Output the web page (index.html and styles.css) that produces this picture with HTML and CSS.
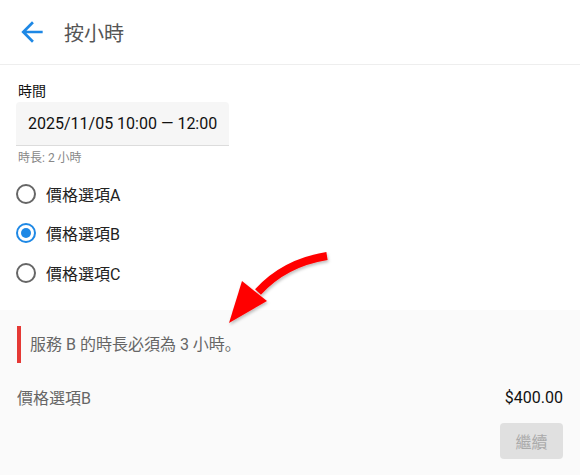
FILE: index.html
```html
<!DOCTYPE html>
<html lang="en">
<head>
    <meta charset="UTF-8">
    <meta name="viewport" content="width=device-width, initial-scale=1.0">
    <title>按小時</title>
    <link rel="stylesheet" href="styles.css">
</head>
<body>
    <div class="page">
        <div class="topbar">
            <svg class="back" width="32" height="32" viewBox="0 0 24 24">
                <path d="M20 11H7.83l5.59-5.59L12 4l-8 8 8 8 1.41-1.41L7.83 13H20v-2z" fill="#1e88e5"/>
            </svg>
            <h1 class="title">按小時</h1>
        </div>

        <div class="form">
            <label class="label">時間</label>
            <div class="field">2025/11/05 10:00 — 12:00</div>
            <p class="hint">時長: 2 小時</p>

            <div class="options">
                <div class="option"><span class="radio"></span>價格選項A</div>
                <div class="option"><span class="radio checked"></span>價格選項B</div>
                <div class="option"><span class="radio"></span>價格選項C</div>
            </div>
        </div>

        <div class="summary">
            <div class="alert">服務 B 的時長必須為 3 小時。</div>
            <div class="price-row">
                <span class="price-name">價格選項B</span>
                <span class="price">$400.00</span>
            </div>
            <div class="actions">
                <button class="next" disabled>繼續</button>
            </div>
        </div>

        <svg class="pointer" width="580" height="475" viewBox="0 0 580 475">
            <defs>
                <filter id="shade" x="-20%" y="-20%" width="140%" height="140%">
                    <feDropShadow dx="1" dy="2" stdDeviation="1.5" flood-color="#000" flood-opacity="0.25"/>
                </filter>
            </defs>
            <g filter="url(#shade)">
                <path d="M327 256 C302 260 278 270 258 292" fill="none" stroke="#ff0000" stroke-width="8"/>
                <polygon points="242,281 267,301 229,323" fill="#ff0000"/>
            </g>
        </svg>
    </div>
</body>
</html>
```

FILE: styles.css
```css
*{
    margin: 0;
    padding: 0;
    box-sizing: border-box;
}
body{
    font-family: Roboto, "Noto Sans CJK SC", sans-serif;
    background: #fff;
    color: #222;
}
.page{
    position: relative;
    width: 580px;
    height: 475px;
    overflow: hidden;
}
.topbar{
    height: 65px;
    display: flex;
    align-items: center;
    border-bottom: 1px solid #eeeeee;
    padding-left: 16px;
}
.back{
    display: block;
}
.title{
    font-size: 20px;
    font-weight: 400;
    color: #555;
    margin-left: 16px;
}
.form{
    padding: 16px 16px 0 16px;
}
.label{
    display: block;
    font-size: 14px;
    line-height: 20px;
    color: #111;
    margin-left: 2px;
}
.field{
    width: 213px;
    height: 44px;
    margin-top: 1px;
    background: #f6f6f6;
    border-radius: 4px 4px 0 0;
    border-bottom: 1px solid #dcdcdc;
    font-size: 16px;
    line-height: 43px;
    padding-left: 12px;
    color: #111;
}
.hint{
    font-size: 12px;
    line-height: 16px;
    color: #888;
    margin-top: 4px;
    margin-left: 2px;
}
.options{
    margin-top: 8px;
}
.option{
    display: flex;
    align-items: center;
    height: 39.5px;
    font-size: 16px;
    color: #222;
}
.radio{
    width: 20px;
    height: 20px;
    border: 2px solid #666;
    border-radius: 50%;
    margin-right: 10px;
    display: flex;
    align-items: center;
    justify-content: center;
}
.radio.checked{
    border-color: #1e88e5;
}
.radio.checked::after{
    content: "";
    width: 10px;
    height: 10px;
    border-radius: 50%;
    background: #1e88e5;
}
.summary{
    position: absolute;
    left: 0;
    right: 0;
    top: 310px;
    bottom: 0;
    background: #fafafa;
    padding: 16px 17px 0 17px;
}
.alert{
    border-left: 4px solid #e53935;
    height: 37px;
    line-height: 37px;
    padding-left: 9px;
    font-size: 16px;
    color: #666;
}
.price-row{
    display: flex;
    justify-content: space-between;
    align-items: center;
    margin-top: 22px;
    height: 24px;
    font-size: 16px;
}
.price-name{
    color: #666;
}
.price{
    color: #111;
}
.actions{
    display: flex;
    justify-content: flex-end;
    margin-top: 14px;
}
.next{
    width: 63px;
    height: 36px;
    border: none;
    border-radius: 4px;
    background: #e0e0e0;
    color: #aaa;
    font-family: Roboto, "Noto Sans CJK SC", sans-serif;
    font-size: 16px;
}
.pointer{
    position: absolute;
    left: 0;
    top: 0;
    pointer-events: none;
}
```
